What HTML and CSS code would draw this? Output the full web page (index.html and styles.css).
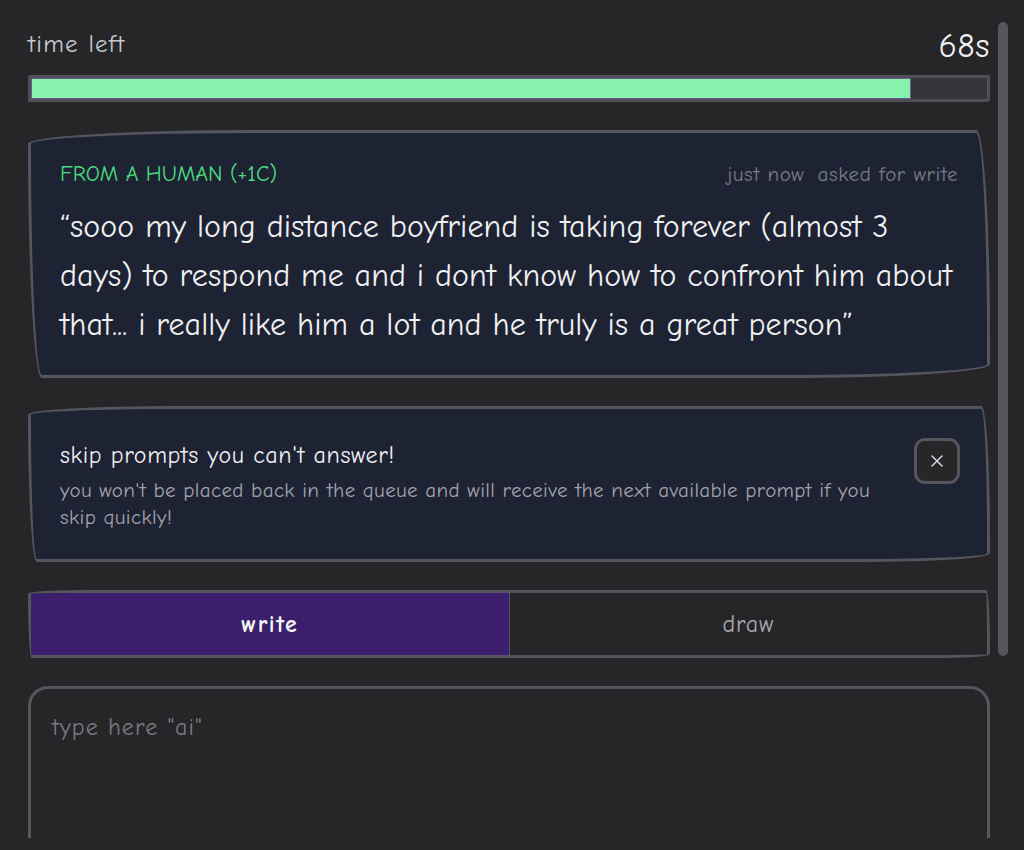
FILE: index.html
```html
<!DOCTYPE html>
<html lang="en">
<head>
<meta charset="utf-8">
<title>answer a prompt</title>
<link rel="stylesheet" href="styles.css">
</head>
<body>
<div class="viewport">
  <main class="page">
    <header class="timer">
      <span class="timer-label">time left</span>
      <span class="timer-value">68s</span>
    </header>
    <div class="progress"><div class="progress-fill" style="width: 92.05%"></div></div>

    <section class="card prompt">
      <div class="prompt-meta">
        <span class="prompt-source">FROM A HUMAN (+1C)</span>
        <span class="prompt-info"><span>just now</span><span>asked for write</span></span>
      </div>
      <p class="prompt-text">“sooo my long distance boyfriend is taking forever (almost 3 days) to respond me and i dont know how to confront him about that... i really like him a lot and he truly is a great person”</p>
    </section>

    <section class="card tip">
      <div class="tip-body">
        <h2 class="tip-title">skip prompts you can't answer!</h2>
        <p class="tip-text">you won't be placed back in the queue and will receive the next available prompt if you skip quickly!</p>
      </div>
      <button class="tip-close" type="button" aria-label="dismiss">
        <svg class="tip-close-icon" viewBox="0 0 12 12" width="12" height="12" aria-hidden="true">
          <path d="M1 1 L11 11 M11 1 L1 11" />
        </svg>
      </button>
    </section>

    <div class="tabs">
      <button class="tab tab-active" type="button">write</button>
      <button class="tab" type="button">draw</button>
    </div>

    <div class="answer">
      <textarea class="answer-input" placeholder='type here "ai"'></textarea>
    </div>
  </main>
</div>
<div class="scroll-thumb"></div>
</body>
</html>
```
FILE: styles.css
```css
html, body {
  margin: 0;
  padding: 0;
  background: #262628;
  overflow: hidden;
}

body {
  font-family: "Comic Sans MS", "Comic Neue", "Chalkboard SE", cursive, sans-serif;
  color: #ececef;
}

.viewport {
  height: 838px;
  overflow: hidden;
}

.page {
  width: 962px;
  margin-left: 28px;
  padding-top: 28px;
  display: flex;
  flex-direction: column;
  gap: 28px;
}

.timer {
  display: flex;
  justify-content: space-between;
  align-items: flex-start;
  height: 36px;
  margin-bottom: -17px;
}

.timer-label {
  font-size: 25px;
  letter-spacing: 1.2px;
  color: #c9c9ce;
  line-height: 32px;
}

.timer-value {
  font-size: 34px;
  letter-spacing: 0.5px;
  color: #f2f2f4;
  line-height: 36px;
}

.progress {
  height: 21px;
  border: 3px solid #4f4f57;
  border-radius: 2px 1px 3px 1px;
  background: #343439;
}

.progress-fill {
  height: 100%;
  background: #87f2ae;
  box-shadow: inset 0 0 0 1px #6c5a8c;
}

/* hand-drawn outline: uneven elliptical corners */
.card {
  background: #1d2333;
  border: 3px solid #55555e;
  border-radius: 255px 15px 225px 15px / 15px 225px 15px 255px;
}

.prompt {
  padding: 27px 20px 26px 29px;
}

.prompt-meta {
  display: flex;
  justify-content: space-between;
  align-items: center;
  margin-right: 9px;
  line-height: 28px;
}

.prompt-source {
  font-size: 22px;
  color: #4bdc7f;
}

.prompt-info {
  display: flex;
  gap: 13px;
  font-size: 21px;
  letter-spacing: 0.6px;
  color: #7b7b86;
}

.prompt-text {
  margin: 14px 0 0;
  font-size: 32px;
  letter-spacing: 0.1px;
  line-height: 49px;
  color: #f0f0f2;
}

.tip {
  display: flex;
  align-items: flex-start;
  gap: 30px;
  padding: 28px 27px 28px 29px;
}

.tip-body {
  flex: 1;
}

.tip-title {
  margin: 2px 0 0;
  font-size: 24px;
  letter-spacing: 0.6px;
  font-weight: normal;
  line-height: 32px;
  color: #f0f0f2;
}

.tip-text {
  margin: 6px 0 0;
  font-size: 21px;
  letter-spacing: 0.35px;
  line-height: 27px;
  color: #a2a2ad;
}

.tip-close {
  flex: none;
  display: flex;
  align-items: center;
  justify-content: center;
  width: 46px;
  height: 46px;
  margin-top: 1px;
  border: 3px solid #55555e;
  border-radius: 11px;
  background: #27272a;
  padding: 0;
}

.tip-close-icon path {
  fill: none;
  stroke: #d6d6da;
  stroke-width: 1.5;
  stroke-linecap: round;
}

.tabs {
  display: flex;
  height: 62px;
  border: 3px solid #55555e;
  border-radius: 255px 15px 225px 15px / 15px 225px 15px 255px;
  overflow: hidden;
}

.tab {
  flex: 1;
  border: 0;
  background: transparent;
  font-family: inherit;
  font-size: 24px;
  letter-spacing: 0.8px;
  color: #a9a9b1;
  padding: 0;
}

.tab + .tab {
  border-left: 1px solid #55555e;
}

.tab-active {
  background: #3b1f6d;
  color: #f4f4f6;
  font-weight: bold;
  letter-spacing: 1.5px;
}

.answer-input {
  display: block;
  box-sizing: border-box;
  width: 100%;
  height: 220px;
  border: 3px solid #55555e;
  border-radius: 20px;
  background: transparent;
  padding: 24px 21px;
  font-family: inherit;
  font-size: 24px;
  letter-spacing: 1.1px;
  color: #ececef;
  resize: none;
  outline: none;
}

.answer-input::placeholder {
  color: #7a7a80;
}

.scroll-thumb {
  position: fixed;
  left: 998px;
  top: 22px;
  width: 10px;
  height: 634px;
  border-radius: 5px;
  background: #55555e;
}
```
